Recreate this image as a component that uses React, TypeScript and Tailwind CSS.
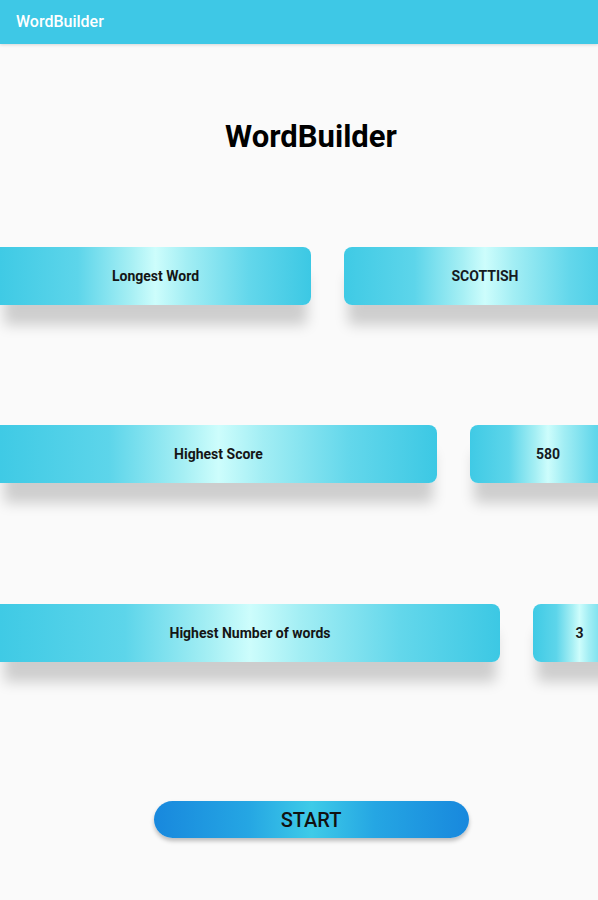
import React from "react";

const cardBg =
  "bg-[linear-gradient(to_right,#3fcae5_0%,#5dd5ea_25%,#a6eff4_42%,#cdfdfc_50%,#a3eef4_60%,#63d7eb_80%,#3cc8e4_100%)]";

const shadow = "shadow-[0_24px_14px_-4px_rgba(0,0,0,0.18)]";

function StatRow({
  label,
  value,
  leftW,
  rightW,
}: {
  label: string;
  value: string;
  leftW: string;
  rightW: string;
}) {
  return (
    <div className="w-full overflow-hidden pb-10">
      <div className="flex gap-[33px] w-[626px]">
        <div
          className={`${leftW} shrink-0 h-[58px] rounded-r-lg ${cardBg} ${shadow} flex items-center justify-center`}
        >
          <span className="text-[14px] font-bold text-[#151515]">{label}</span>
        </div>
        <div
          className={`${rightW} shrink-0 h-[58px] rounded-lg ${cardBg} ${shadow} flex items-center justify-center`}
        >
          <span className="text-[14px] font-bold text-[#151a1f]">{value}</span>
        </div>
      </div>
    </div>
  );
}

export default function App() {
  return (
    <div
      className="w-full min-h-[900px] bg-[#fafafa] flex flex-col"
      style={{ fontFamily: "Roboto, 'Liberation Sans', sans-serif" }}
    >
      {/* ── APP BAR ── */}
      <div className="h-[44px] bg-[#3ec8e6] flex items-center px-4 shadow-[0_1px_3px_rgba(0,0,0,0.15)]">
        <span className="text-white text-[16px] font-medium">WordBuilder</span>
      </div>

      <h1 className="mt-[74px] pl-[24px] text-center text-[31px] leading-[38px] font-bold text-black">
        WordBuilder
      </h1>

      <div className="mt-[91px] flex flex-col">
        <StatRow label="Longest Word" value="SCOTTISH" leftW="w-[311px]" rightW="w-[282px]" />
        <div className="mt-[80px]">
          <StatRow label="Highest Score" value="580" leftW="w-[437px]" rightW="w-[156px]" />
        </div>
        <div className="mt-[81px]">
          <StatRow
            label="Highest Number of words"
            value="3"
            leftW="w-[500px]"
            rightW="w-[93px]"
          />
        </div>
      </div>

      <div className="mt-[99px] pl-[24px] flex justify-center">
        <button className="w-[315px] h-[37px] rounded-full bg-[linear-gradient(to_right,#1888dd_0%,#25a6e3_30%,#3ecbe8_50%,#25a6e3_70%,#1888dd_100%)] shadow-[0_3px_4px_rgba(0,0,0,0.25)] flex items-center justify-center">
          <span className="text-[20px] font-medium text-[#111]">START</span>
        </button>
      </div>
    </div>
  );
}
